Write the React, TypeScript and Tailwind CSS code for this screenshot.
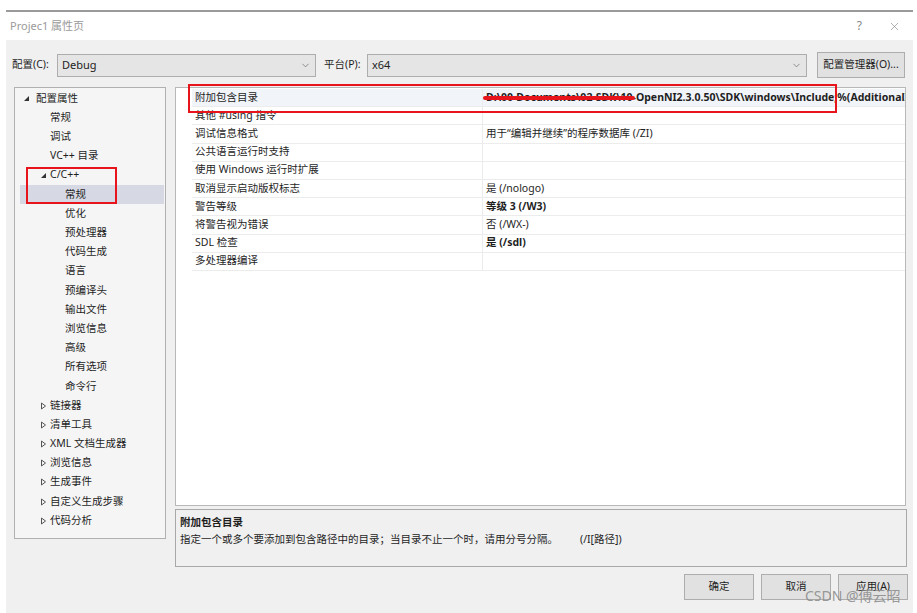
import { ChevronDown, X } from 'lucide-react'

const font = "font-['Noto_Sans','Noto_Sans_CJK_SC',sans-serif]"

type TreeItem = { label: string; level: 0 | 1 | 2; arrow?: 'open' | 'closed'; selected?: boolean }

const tree: TreeItem[] = [
  { label: '配置属性', level: 0, arrow: 'open' },
  { label: '常规', level: 1 },
  { label: '调试', level: 1 },
  { label: 'VC++ 目录', level: 1 },
  { label: 'C/C++', level: 1, arrow: 'open' },
  { label: '常规', level: 2, selected: true },
  { label: '优化', level: 2 },
  { label: '预处理器', level: 2 },
  { label: '代码生成', level: 2 },
  { label: '语言', level: 2 },
  { label: '预编译头', level: 2 },
  { label: '输出文件', level: 2 },
  { label: '浏览信息', level: 2 },
  { label: '高级', level: 2 },
  { label: '所有选项', level: 2 },
  { label: '命令行', level: 2 },
  { label: '链接器', level: 1, arrow: 'closed' },
  { label: '清单工具', level: 1, arrow: 'closed' },
  { label: 'XML 文档生成器', level: 1, arrow: 'closed' },
  { label: '浏览信息', level: 1, arrow: 'closed' },
  { label: '生成事件', level: 1, arrow: 'closed' },
  { label: '自定义生成步骤', level: 1, arrow: 'closed' },
  { label: '代码分析', level: 1, arrow: 'closed' },
]

const props: { name: string; value: string; bold?: boolean }[] = [
  { name: '附加包含目录', value: '' },
  { name: '其他 #using 指令', value: '' },
  { name: '调试信息格式', value: '用于“编辑并继续”的程序数据库 (/ZI)' },
  { name: '公共语言运行时支持', value: '' },
  { name: '使用 Windows 运行时扩展', value: '' },
  { name: '取消显示启动版权标志', value: '是 (/nologo)' },
  { name: '警告等级', value: '等级 3 (/W3)', bold: true },
  { name: '将警告视为错误', value: '否 (/WX-)' },
  { name: 'SDL 检查', value: '是 (/sdl)', bold: true },
  { name: '多处理器编译', value: '' },
]

function Arrow({ kind }: { kind: 'open' | 'closed' }) {
  if (kind === 'open') {
    return (
      <svg width="7" height="7" viewBox="0 0 7 7" className="shrink-0">
        <path d="M6 1 L6 6 L1 6 Z" fill="#333" />
      </svg>
    )
  }
  return (
    <svg width="7" height="8" viewBox="0 0 7 8" className="shrink-0">
      <path d="M1.5 1 L5.5 4 L1.5 7 Z" fill="none" stroke="#555" strokeWidth="1" />
    </svg>
  )
}

function Combo({ value, width }: { value: string; width: string }) {
  return (
    <div className={`${width} h-[23px] bg-[#e5e5e5] border border-[#adadad] flex items-center justify-between pl-[4px] pr-[4px]`}>
      <span className="text-[11px] text-[#222]">{value}</span>
      <ChevronDown size={11} strokeWidth={1.5} className="text-[#666]" />
    </div>
  )
}

export default function App() {
  return (
    <div className={`relative w-[917px] h-[613px] bg-white overflow-hidden ${font} text-[#1e1e1e]`}>
      <div className="ml-[6px] mr-[4px] pt-[10px] h-full flex flex-col">
        {/* title bar */}
        <div className="h-[30px] border-t-2 border-[#9a9a9a] bg-white flex items-center justify-between pl-[4px] pr-[12px]">
          <span className="text-[11px] text-[#9a9a9a]">Projec1 属性页</span>
          <div className="flex items-center gap-[26px] text-[#888]">
            <span className="text-[12px]">?</span>
            <X size={13} strokeWidth={1.2} />
          </div>
        </div>

        {/* body */}
        <div className="flex-1 bg-[#f0f0f0] flex flex-col">
          <div className="h-[43px] flex items-center pl-[6px] pt-[7px]">
            <span className="text-[10.5px] w-[45px]">配置(C):</span>
            <Combo value="Debug" width="w-[259px]" />
            <span className="text-[10.5px] ml-[8px] w-[43px]">平台(P):</span>
            <Combo value="x64" width="w-[440px]" />
            <button className="ml-[10px] w-[88px] h-[26px] bg-[#e1e1e1] border border-[#adadad] text-[10.5px]">配置管理器(O)...</button>
          </div>

          <div className="flex items-start pl-[8px] pt-[4px] h-[483px]">
            {/* tree */}
            <div className="w-[152px] h-[452px] bg-[#f5f5f5] border border-[#b0b0b0] pt-[1px] pl-[5px] pr-[1px]">
              {tree.map((t, i) => (
                <div
                  key={i}
                  className={`h-[19.2px] flex items-center text-[10.5px] ${t.selected ? 'bg-[#d6d8e4]' : ''}`}
                >
                  {t.level === 0 && (
                    <div className="flex items-center gap-[6px] pl-[3px]">
                      <Arrow kind="open" />
                      <span>{t.label}</span>
                    </div>
                  )}
                  {t.level === 1 && (
                    <div className="flex items-center pl-[20px]">
                      <span className="w-[10px] flex">{t.arrow && <Arrow kind={t.arrow} />}</span>
                      <span>{t.label}</span>
                    </div>
                  )}
                  {t.level === 2 && <span className="pl-[45px]">{t.label}</span>}
                </div>
              ))}
            </div>

            {/* right side */}
            <div className="ml-[9px] flex flex-col">
              <div className="w-[731px] h-[419px] bg-white border border-[#b8b8b8] pl-[16px] pt-[1px] overflow-hidden">
                {props.map((p, i) => (
                  <div key={i} className={`h-[18.2px] flex border-b border-[#ececec] ${i === 0 ? 'bg-[#f1f4f9]' : ''}`}>
                    <div className="w-[291px] pl-[3px] flex items-center text-[10.5px] border-r border-[#ececec]">{p.name}</div>
                    <div className={`flex-1 pl-[3px] flex items-center text-[10.5px] whitespace-nowrap overflow-hidden ${p.bold ? 'font-bold' : ''}`}>
                      {i === 0 ? (
                        <span className="relative font-bold">
                          D:\00-Documents\02-SDK\10-OpenNI2.3.0.50\SDK\windows\Include;%(AdditionalIncludeDirectories)
                          <span className="absolute left-[-3px] top-[6px] w-[152px] h-[4px] bg-[#e8141c] rounded-full" />
                        </span>
                      ) : (
                        p.value
                      )}
                    </div>
                  </div>
                ))}
              </div>

              <div className="mt-[3px] w-[732px] h-[58px] bg-[#f0f0f0] border border-[#a8a8a8] px-[4px] pt-[4px]">
                <div className="text-[10.5px] font-bold leading-[16px]">附加包含目录</div>
                <div className="text-[10.5px] leading-[18px] flex">
                  <span>指定一个或多个要添加到包含路径中的目录；当目录不止一个时，请用分号分隔。</span>
                  <span className="ml-[22px]">(/I[路径])</span>
                </div>
              </div>
            </div>
          </div>

          <div className="flex justify-end gap-[7px] pr-[5px] mt-[8px]">
            <button className="w-[70px] h-[26px] bg-[#e1e1e1] border border-[#adadad] text-[10.5px]">确定</button>
            <button className="w-[70px] h-[26px] bg-[#e1e1e1] border border-[#adadad] text-[10.5px]">取消</button>
            <button className="w-[70px] h-[26px] bg-[#e1e1e1] border border-[#adadad] text-[10.5px]">应用(A)</button>
          </div>
        </div>
      </div>

      {/* annotation boxes */}
      <div className="absolute left-[26px] top-[167px] w-[91px] h-[37px] border-2 border-[#e8141c]" />
      <div className="absolute left-[188px] top-[84px] w-[649px] h-[29px] border-2 border-[#e8141c]" />

      {/* watermark */}
      <div className="absolute left-[805px] top-[585px] text-[14px] text-[#8c8c8c]/90">CSDN @傅云昭</div>
    </div>
  )
}
